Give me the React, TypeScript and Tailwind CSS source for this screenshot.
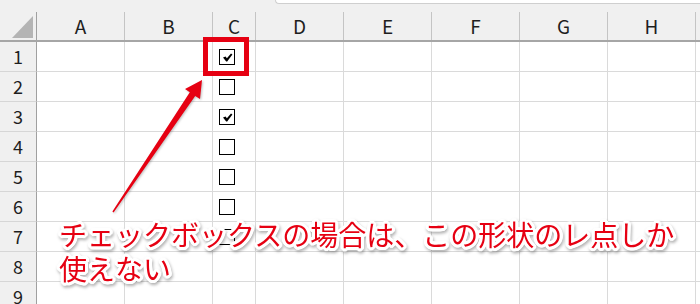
import React from "react";

const columns = [
  { label: "A", w: "w-[88px]" },
  { label: "B", w: "w-[88px]" },
  { label: "C", w: "w-[43px]" },
  { label: "D", w: "w-[88px]" },
  { label: "E", w: "w-[88px]" },
  { label: "F", w: "w-[88px]" },
  { label: "G", w: "w-[88px]" },
  { label: "H", w: "w-[88px]" },
  { label: "", w: "w-[88px]" },
];

const rows = [1, 2, 3, 4, 5, 6, 7, 8, 9];
const checked: Record<number, boolean> = { 1: true, 3: true };

function CheckBox({ on }: { on: boolean }) {
  return (
    <div className="w-[16px] h-[16px] border-[1.5px] border-black bg-white flex items-center justify-center">
      {on && (
        <svg width="11" height="11" viewBox="0 0 11 11">
          <path d="M1 5.4 L3.6 4.4 L4.9 6.2 L9 1.4 L10.4 2.6 L5.2 9.6 L4.2 9.6 Z" fill="#000" />
        </svg>
      )}
    </div>
  );
}

export default function App() {
  return (
    <div className="relative w-[700px] h-[304px] overflow-hidden bg-white font-['Noto_Sans_CJK_JP','Noto_Sans',sans-serif]">
      {/* ribbon / formula bar edge */}
      <div className="h-[12px] bg-[#f0f0f0]">
        <div className="ml-[275px] h-[4px] bg-white border-b border-l border-[#cfcfcf] rounded-bl-[4px]" />
      </div>

      {/* column headers */}
      <div className="flex h-[30px] bg-[#f0f0f0] border-b-2 border-[#a6a6a6]">
        <div className="w-[37px] flex-none border-r border-[#a0a0a0] relative">
          <svg className="absolute left-[12px] top-[4px]" width="22" height="22" viewBox="0 0 22 22">
            <polygon points="21,0 21,22 0,22" fill="#b4b4b4" />
          </svg>
        </div>
        {columns.map((c, i) => (
          <div
            key={i}
            className={`${c.w} flex-none border-r border-[#c4c4c4] flex items-center justify-center text-[19px] text-[#1e1e1e]`}
          >
            {c.label}
          </div>
        ))}
      </div>

      {/* body */}
      {rows.map((r) => (
        <div key={r} className="flex h-[30px]">
          <div className="w-[37px] flex-none bg-[#f0f0f0] border-r border-[#a0a0a0] border-b border-b-[#d6d6d6] flex items-center justify-center text-[18px] text-[#1e1e1e]">
            {r}
          </div>
          {columns.map((c, i) => (
            <div key={i} className={`${c.w} flex-none border-r border-b border-[#dadada] pl-[6px] pt-[7px]`}>
              {c.label === "C" && r <= 7 && <CheckBox on={!!checked[r]} />}
            </div>
          ))}
        </div>
      ))}

      {/* red highlight box */}
      <div className="absolute left-[203px] top-[37px] w-[46px] h-[39px] border-[5px] border-[#e60012]" />

      {/* arrow */}
      <svg className="absolute left-0 top-0 drop-shadow-[1px_1px_1px_rgba(0,0,0,0.25)]" width="700" height="304" viewBox="0 0 700 304">
        <polygon
          points="202,80 200,99.1 195.2,95.9 113.6,212.4 112.4,211.6 189.8,92.3 185,89.1"
          fill="#e60012"
        />
      </svg>

      {/* caption */}
      <div className="absolute left-[59px] top-[217px] text-[28px] leading-[34px] font-normal text-[#e60012] whitespace-nowrap drop-shadow-[1px_2px_1.5px_rgba(0,0,0,0.3)] [text-shadow:3px_0_0_#fff,-3px_0_0_#fff,0_3px_0_#fff,0_-3px_0_#fff,2px_2px_0_#fff,-2px_2px_0_#fff,2px_-2px_0_#fff,-2px_-2px_0_#fff,3px_1px_0_#fff,-3px_1px_0_#fff,3px_-1px_0_#fff,-3px_-1px_0_#fff,1px_3px_0_#fff,-1px_3px_0_#fff,1px_-3px_0_#fff,-1px_-3px_0_#fff]">
        <div>チェックボックスの場合は、この形状のレ点しか</div>
        <div>使えない</div>
      </div>
    </div>
  );
}
